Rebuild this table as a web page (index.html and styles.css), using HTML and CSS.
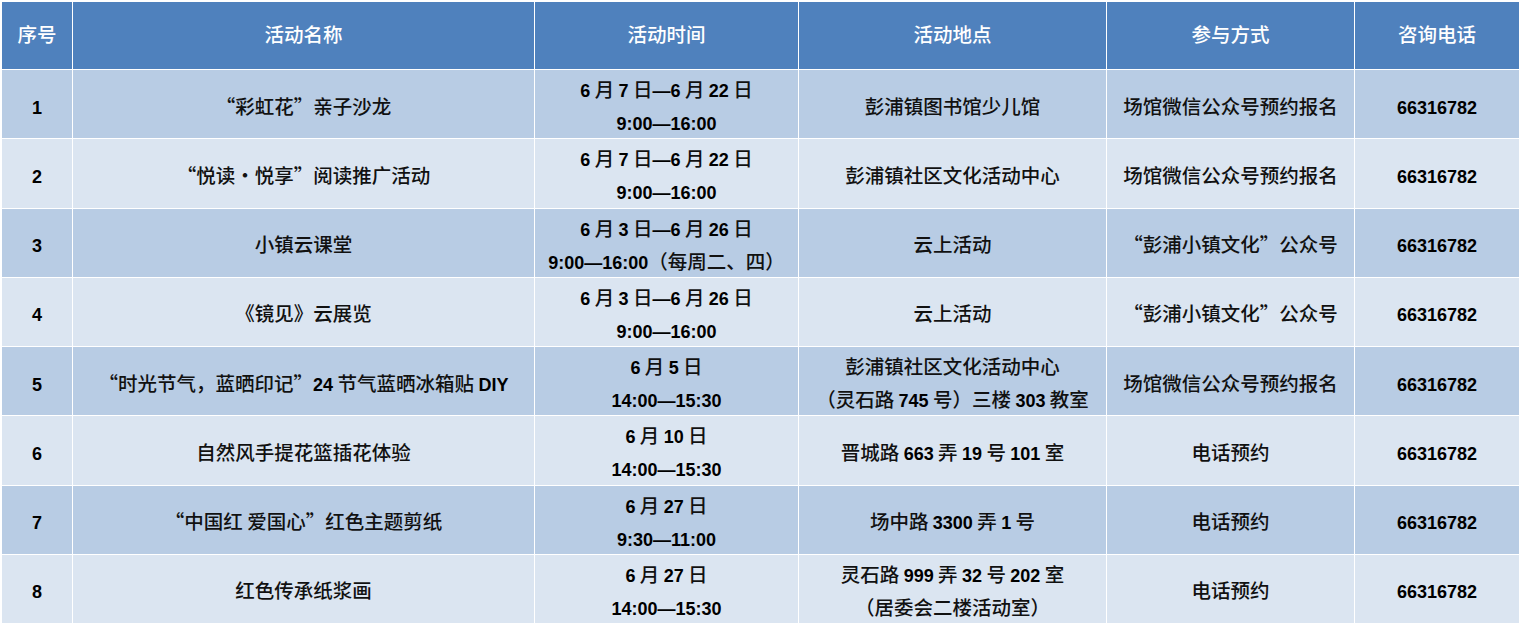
FILE: index.html
```html
<!DOCTYPE html>
<html lang="zh-CN">
<head>
<meta charset="utf-8">
<title>活动表</title>
<link rel="stylesheet" href="styles.css">
</head>
<body>
<table class="events">
  <colgroup>
    <col class="c1"><col class="c2"><col class="c3"><col class="c4"><col class="c5"><col class="c6">
  </colgroup>
  <thead>
    <tr class="head">
      <th>序号</th><th>活动名称</th><th>活动时间</th><th>活动地点</th><th>参与方式</th><th>咨询电话</th>
    </tr>
  </thead>
  <tbody>
    <tr class="odd">
      <td><span class="n">1</span></td>
      <td>“彩虹花”亲子沙龙</td>
      <td><span class="n">6</span> 月 <span class="n">7</span> 日<span class="n">—6</span> 月 <span class="n">22</span> 日<br><span class="n">9:00—16:00</span></td>
      <td>彭浦镇图书馆少儿馆</td>
      <td>场馆微信公众号预约报名</td>
      <td><span class="n">66316782</span></td>
    </tr>
    <tr class="even">
      <td><span class="n">2</span></td>
      <td>“悦读•悦享”阅读推广活动</td>
      <td><span class="n">6</span> 月 <span class="n">7</span> 日<span class="n">—6</span> 月 <span class="n">22</span> 日<br><span class="n">9:00—16:00</span></td>
      <td>彭浦镇社区文化活动中心</td>
      <td>场馆微信公众号预约报名</td>
      <td><span class="n">66316782</span></td>
    </tr>
    <tr class="odd">
      <td><span class="n">3</span></td>
      <td>小镇云课堂</td>
      <td><span class="n">6</span> 月 <span class="n">3</span> 日<span class="n">—6</span> 月 <span class="n">26</span> 日<br><span class="n">9:00—16:00</span>（每周二、四）</td>
      <td>云上活动</td>
      <td>“彭浦小镇文化”公众号</td>
      <td><span class="n">66316782</span></td>
    </tr>
    <tr class="even">
      <td><span class="n">4</span></td>
      <td>《镜见》云展览</td>
      <td><span class="n">6</span> 月 <span class="n">3</span> 日<span class="n">—6</span> 月 <span class="n">26</span> 日<br><span class="n">9:00—16:00</span></td>
      <td>云上活动</td>
      <td>“彭浦小镇文化”公众号</td>
      <td><span class="n">66316782</span></td>
    </tr>
    <tr class="odd">
      <td><span class="n">5</span></td>
      <td>“时光节气，蓝晒印记”<span class="n">24</span> 节气蓝晒冰箱贴 <span class="n">DIY</span></td>
      <td><span class="n">6</span> 月 <span class="n">5</span> 日<br><span class="n">14:00—15:30</span></td>
      <td>彭浦镇社区文化活动中心<br>（灵石路 <span class="n">745</span> 号）三楼 <span class="n">303</span> 教室</td>
      <td>场馆微信公众号预约报名</td>
      <td><span class="n">66316782</span></td>
    </tr>
    <tr class="even">
      <td><span class="n">6</span></td>
      <td>自然风手提花篮插花体验</td>
      <td><span class="n">6</span> 月 <span class="n">10</span> 日<br><span class="n">14:00—15:30</span></td>
      <td>晋城路 <span class="n">663</span> 弄 <span class="n">19</span> 号 <span class="n">101</span> 室</td>
      <td>电话预约</td>
      <td><span class="n">66316782</span></td>
    </tr>
    <tr class="odd">
      <td><span class="n">7</span></td>
      <td>“中国红 爱国心”红色主题剪纸</td>
      <td><span class="n">6</span> 月 <span class="n">27</span> 日<br><span class="n">9:30—11:00</span></td>
      <td>场中路 <span class="n">3300</span> 弄 <span class="n">1</span> 号</td>
      <td>电话预约</td>
      <td><span class="n">66316782</span></td>
    </tr>
    <tr class="even">
      <td><span class="n">8</span></td>
      <td>红色传承纸浆画</td>
      <td><span class="n">6</span> 月 <span class="n">27</span> 日<br><span class="n">14:00—15:30</span></td>
      <td>灵石路 <span class="n">999</span> 弄 <span class="n">32</span> 号 <span class="n">202</span> 室<br>（居委会二楼活动室）</td>
      <td>电话预约</td>
      <td><span class="n">66316782</span></td>
    </tr>
  </tbody>
</table>
</body>
</html>
```

FILE: styles.css
```css
html, body {
  margin: 0;
  padding: 0;
  background: #ffffff;
}

.events {
  margin: 1px 0 0 1px;
  border-collapse: separate;
  border-spacing: 1px;
  background: #ffffff;
  table-layout: fixed;
  width: 1519px;
  font-family: "Noto Sans CJK SC", "Liberation Sans", sans-serif;
  font-size: 19.5px;
  font-weight: 500;
  color: #111111;
}

.c1 { width: 70px; }
.c2 { width: 461px; }
.c3 { width: 263px; }
.c4 { width: 307px; }
.c5 { width: 247px; }
.c6 { width: 164px; }

.events th,
.events td {
  padding: 0;
  text-align: center;
  vertical-align: middle;
  white-space: nowrap;
  overflow: hidden;
}

.head th {
  height: 67px;
  box-sizing: border-box;
  padding-bottom: 3px;
  background: #4f81bd;
  color: #ffffff;
  font-weight: 500;
  line-height: 30px;
}

.events td {
  height: 66.25px;
  padding-top: 2px;
  line-height: 33px;
}

.odd td { background: #b8cce4; }
.even td { background: #dbe5f1; }

.n {
  font-family: "Liberation Sans", "Noto Sans CJK SC", sans-serif;
  font-weight: 700;
  font-size: 18px;
  line-height: 18px;
  color: #000000;
}
```
